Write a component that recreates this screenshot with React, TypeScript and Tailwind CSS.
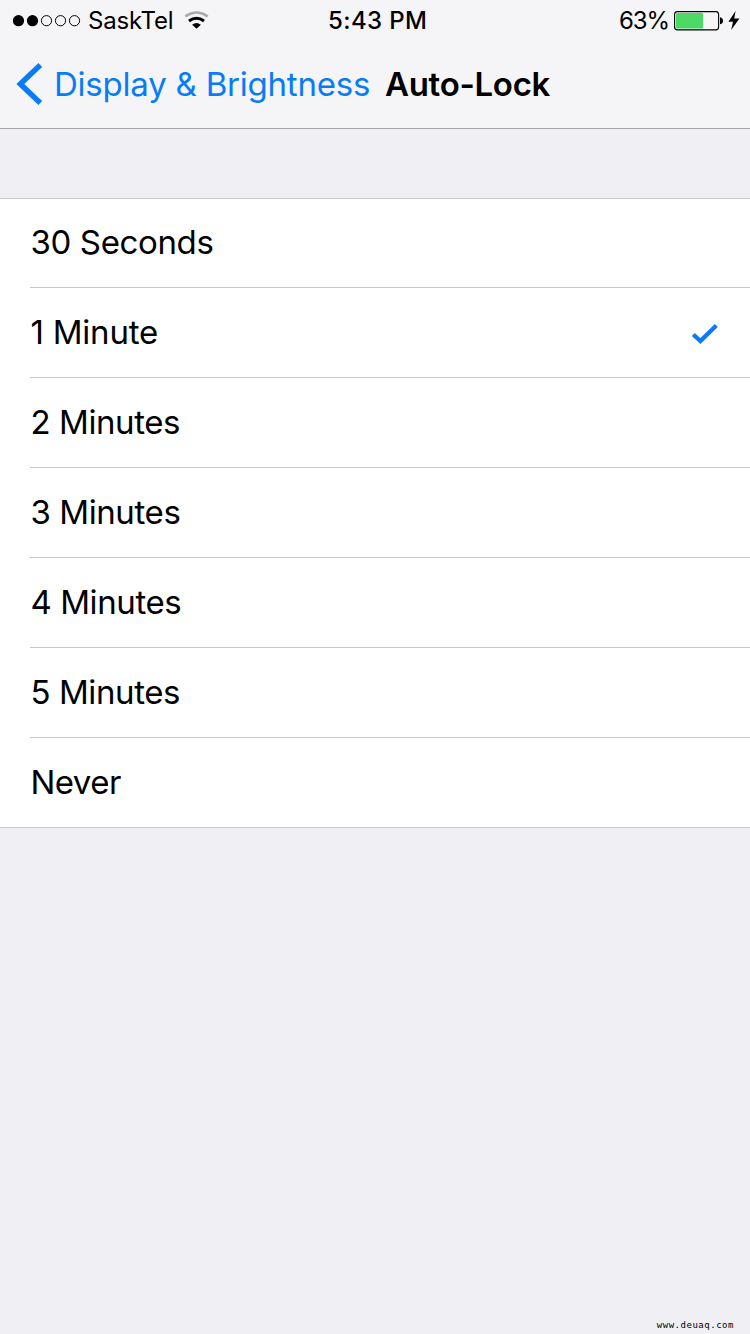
type Option = { label: string; tracking: string; selected?: boolean };

const options: Option[] = [
  { label: "30 Seconds", tracking: "tracking-[-0.35px]" },
  { label: "1 Minute", tracking: "tracking-[-0.2px]", selected: true },
  { label: "2 Minutes", tracking: "tracking-[-0.4px]" },
  { label: "3 Minutes", tracking: "tracking-[-0.4px]" },
  { label: "4 Minutes", tracking: "tracking-[-0.4px]" },
  { label: "5 Minutes", tracking: "tracking-[-0.4px]" },
  { label: "Never", tracking: "tracking-[-0.5px]" },
];

function SignalDots() {
  return (
    <svg width="68" height="12" viewBox="0 0 68 12" className="shrink-0">
      <circle cx="5.5" cy="5.7" r="5.6" />
      <circle cx="19.5" cy="5.7" r="5.6" />
      {[33.5, 47.5, 61.5].map((cx) => (
        <circle key={cx} cx={cx} cy="5.7" r="5.1" fill="none" stroke="#000" strokeWidth="1" />
      ))}
    </svg>
  );
}

function WifiIcon() {
  return (
    <svg width="25" height="20" viewBox="0 0 25 20" fill="none" className="shrink-0">
      <path d="M1.3 5.4Q12.5 -2.4 23.7 5.4" stroke="#ababad" strokeWidth="2.6" />
      <path d="M5 10Q12.5 4.4 20 10" stroke="#000" strokeWidth="3" />
      <path d="M8.1 13.7Q12.5 10.4 16.9 13.7L12.5 17.7Z" fill="#000" />
    </svg>
  );
}

function BatteryIcon() {
  return (
    <svg width="50" height="20" viewBox="0 0 50 20" className="shrink-0">
      <rect x="0.6" y="0.6" width="44" height="18.3" rx="2.8" fill="none" stroke="#000" strokeWidth="1.1" />
      <rect x="2" y="2" width="27" height="15.5" rx="1" fill="#4cd964" />
      <path d="M46 6.3Q49 6.8 49 9.8Q49 12.8 46 13.3Z" />
    </svg>
  );
}

function BoltIcon() {
  return (
    <svg width="12" height="20" viewBox="0 0 12 20" className="shrink-0">
      <path d="M7.6 0L0.4 10.8H5L3.2 19L11.4 7.6H6.2Z" />
    </svg>
  );
}

export default function App() {
  return (
    <div className="flex h-[1334px] w-[750px] flex-col overflow-hidden bg-[#efeff4] font-['Inter','Liberation_Sans',sans-serif] text-black">
      <header className="flex h-[129px] shrink-0 flex-col border-b border-[#a7a7ac] bg-[#f5f5f7]">
        <div className="grid h-10 grid-cols-3 items-center pt-px text-2xl leading-10 whitespace-nowrap">
          <div className="flex h-10 items-center pl-[13px]">
            <SignalDots />
            <span className="ml-[7px] w-[88px] tracking-[-0.2px]">SaskTel</span>
            <span className="ml-2"><WifiIcon /></span>
          </div>
          <div className="pl-[78px] font-medium tracking-[0.4px]">5:43 PM</div>
          <div className="flex h-10 items-center justify-end pr-[10px]">
            <span className="w-[55px] tracking-[-1.1px]">63%</span>
            <BatteryIcon />
            <span className="ml-1"><BoltIcon /></span>
          </div>
        </div>
        <nav className="flex h-[88px] items-center pl-4 text-[33px] leading-[88px] whitespace-nowrap">
          <button className="flex items-center text-[#087cf8]">
            <svg width="27" height="42" viewBox="0 0 27 42" fill="none" className="shrink-0">
              <path d="M24.3 2L4.3 21L24.3 40" stroke="#087cf8" strokeWidth="5.4" />
            </svg>
            <span className="ml-[11px] w-[331px] text-left tracking-[-0.22px]">Display &amp; Brightness</span>
          </button>
          <h1 className="font-semibold tracking-[-0.3px]">Auto-Lock</h1>
        </nav>
      </header>
      <ul className="mt-[69px] border-y border-[#c8c7cc] bg-white">
        {options.map(({ label, tracking, selected }, i) => (
          <li
            key={label}
            className={`ml-[30px] flex items-center justify-between pr-8 text-[33px] leading-[86px] ${
              i === 0
                ? "h-[89px] border-b border-[#c8c7cc]"
                : i < options.length - 1
                  ? "h-[90px] border-b border-[#c8c7cc]"
                  : "h-[89px]"
            }`}
          >
            <span className={`h-[88px] pl-[0.4px] ${tracking}`}>{label}</span>
            {selected && (
              <svg width="27" height="22" viewBox="0 0 27 22" fill="none" className="mt-[3px]">
                <path d="M2.3 11.5L9.4 18L25.3 2.5" stroke="#087cf8" strokeWidth="4.3" />
              </svg>
            )}
          </li>
        ))}
      </ul>
      <footer className="mt-auto flex h-[18px] justify-end pr-4 font-['DejaVu_Sans_Mono',monospace] text-[9px] leading-[18px] tracking-[0.52px]">
        www.deuaq.com
      </footer>
    </div>
  );
}
